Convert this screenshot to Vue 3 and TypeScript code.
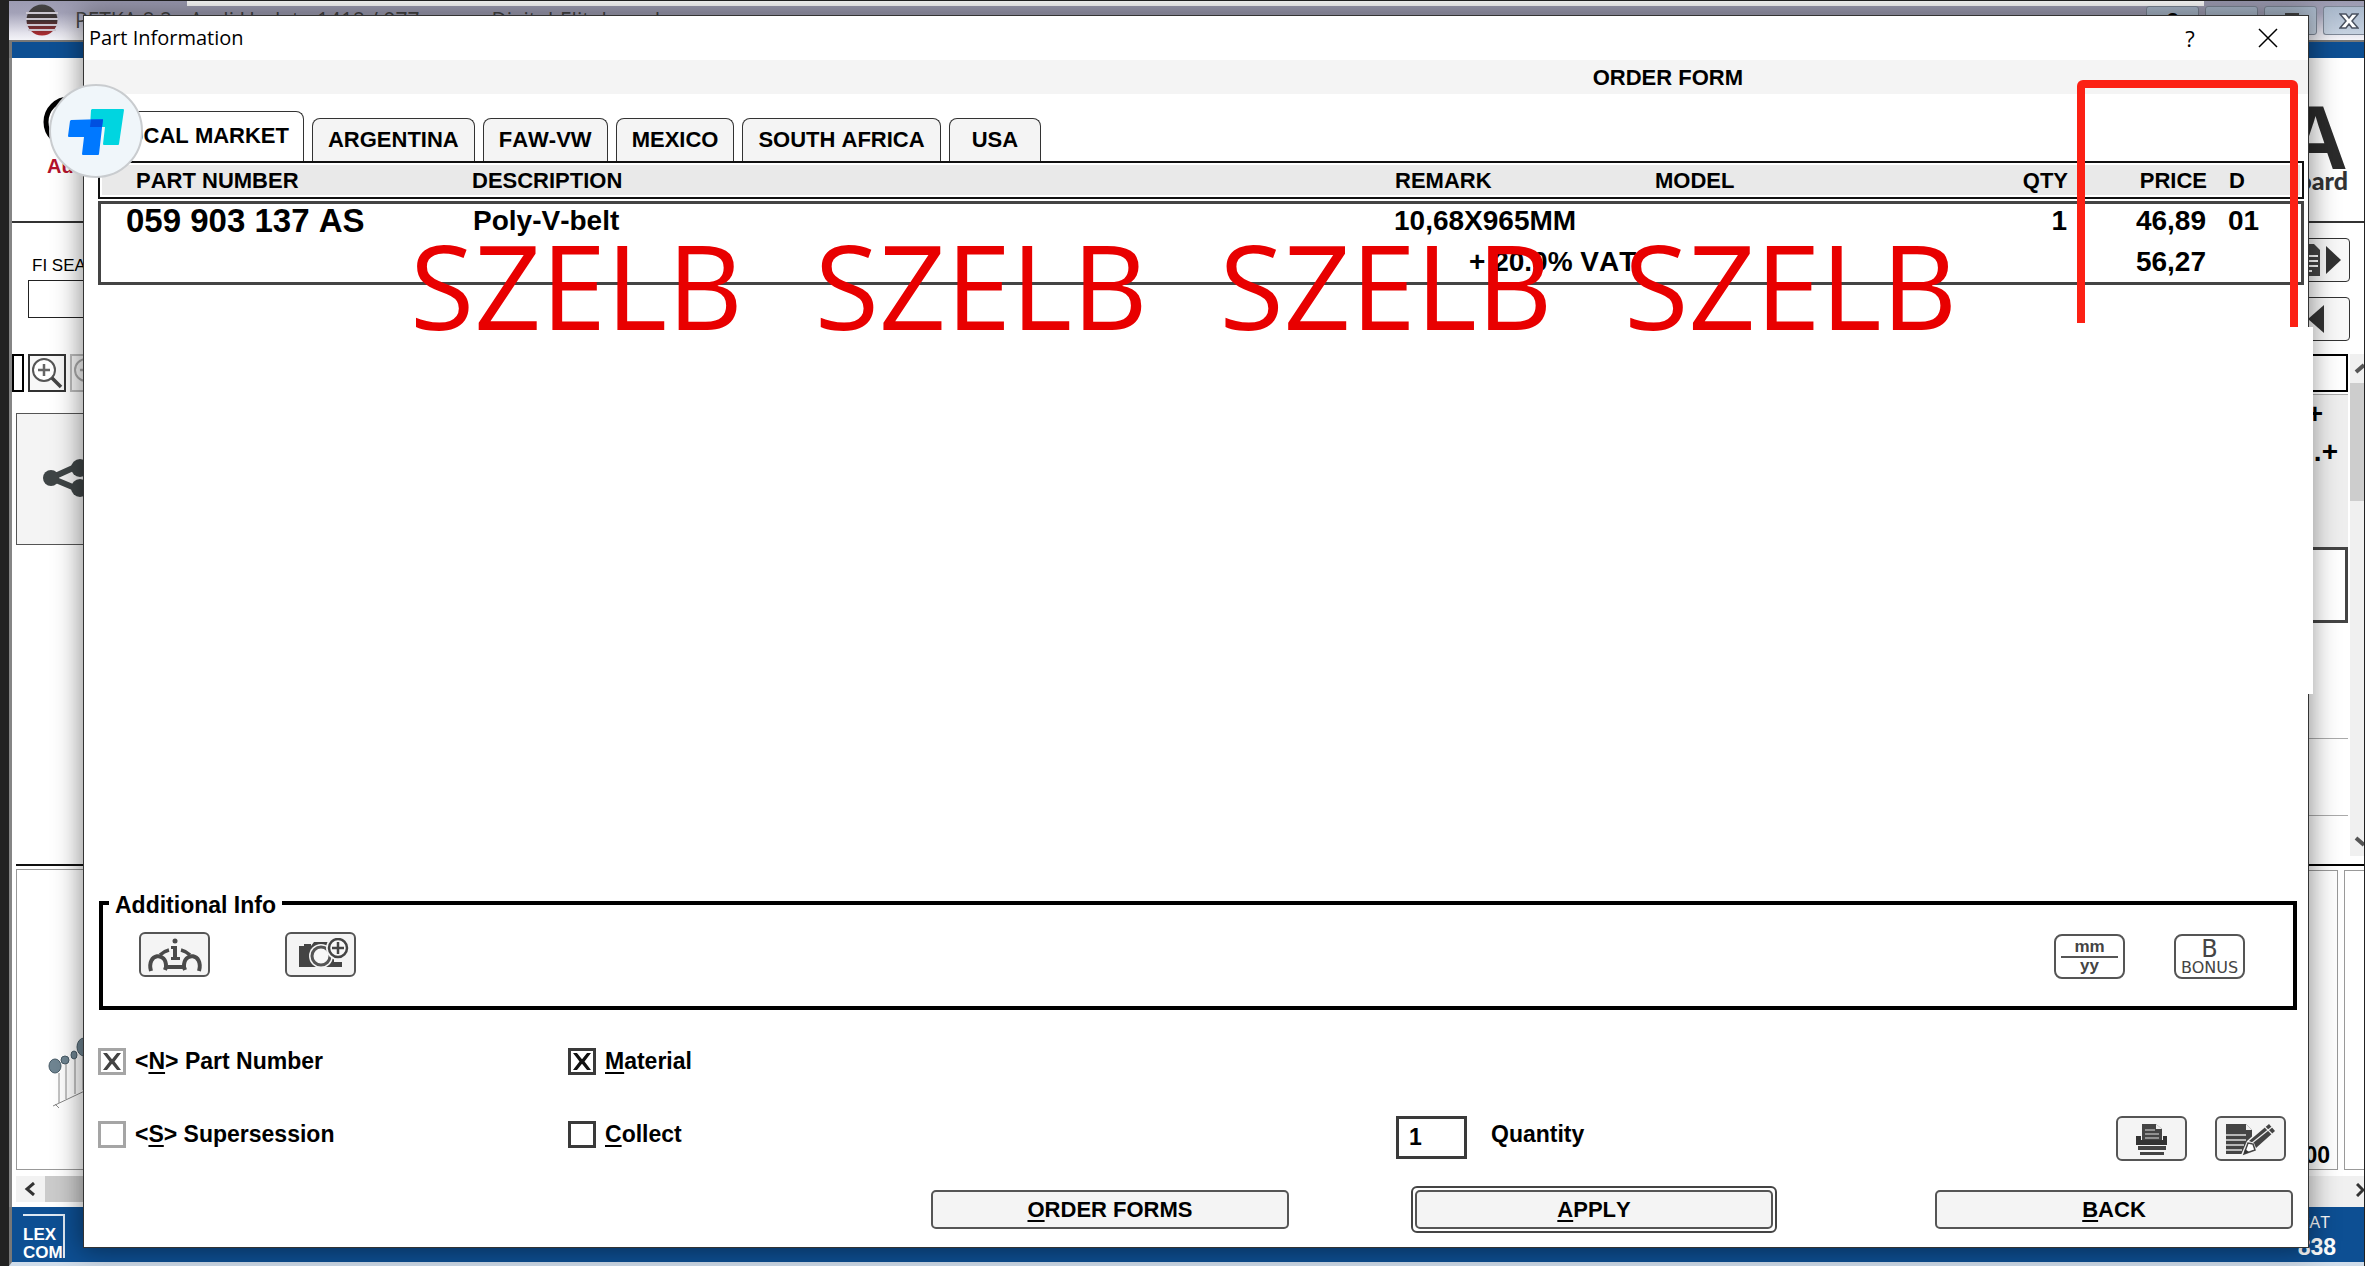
<script setup lang="ts">
import { ref } from 'vue'

interface Market {
  id: string
  label: string
}

const markets: Market[] = [
  { id: 'local', label: 'LOCAL MARKET' },
  { id: 'ar', label: 'ARGENTINA' },
  { id: 'cn', label: 'FAW-VW' },
  { id: 'mx', label: 'MEXICO' },
  { id: 'za', label: 'SOUTH AFRICA' },
  { id: 'us', label: 'USA' },
]
const activeMarket = ref('local')
const usePartNumber = ref(true)
const useSupersession = ref(false)
const material = ref(true)
const collect = ref(false)
const quantity = ref('1')
const stamps = [1, 2, 3, 4]
</script>

<template>
  <div class="screen">
    <!-- catalogue window behind the dialog -->
    <div class="app-window">
      <header class="app-title">
        <svg class="app-logo" width="32" height="32" viewBox="0 0 32 32" aria-hidden="true">
          <defs>
            <linearGradient id="ball" x1="0" y1="0" x2="0" y2="1">
              <stop offset="0" stop-color="#444" />
              <stop offset="0.5" stop-color="#3a3030" />
              <stop offset="1" stop-color="#b02a30" />
            </linearGradient>
          </defs>
          <circle cx="16" cy="16" r="15.5" fill="url(#ball)" />
          <path d="M0 9h32M0 15h32M0 21h32M2 26h28" stroke="#cbc6cf" stroke-width="2" />
        </svg>
        <span class="app-name">PETKA 8.2 - Audi Update 1418 / 977 - www.Digital-Eliteboard.com</span>
        <div class="win-buttons">
          <button type="button" aria-label="Help">?</button>
          <button type="button" aria-label="Minimise"></button>
          <button type="button" aria-label="Restore">
            <svg width="20" height="18" viewBox="0 0 20 18"><path d="M5 6V2h12v9h-4M2 6h11v10H2z" fill="#fff" stroke="#444" stroke-width="2" /></svg>
          </button>
          <button type="button" class="win-close" aria-label="Close application">
            <svg width="20" height="16" viewBox="0 0 20 16"><path d="M1 1h6l3 4 3-4h6l-6 7 6 7h-6l-3-4-3 4H1l6-7z" fill="#fff" stroke="#4a5260" stroke-width="1.5" /></svg>
          </button>
        </div>
      </header>
      <div class="blue-strip"></div>

      <div class="app-body">
        <aside class="side-left">
          <div class="brand">
            <svg width="60" height="60" viewBox="0 0 60 60" aria-hidden="true"><circle cx="31" cy="30" r="23" fill="none" stroke="#000" stroke-width="5" /></svg>
            <span class="brand-name">Audi</span>
          </div>
          <div class="search">
            <label for="fi">FI SEARCH</label>
            <input id="fi" type="text" />
          </div>
          <div class="zoom-tools">
            <span class="zoom-edge"></span>
            <button type="button" aria-label="Zoom in">
              <svg width="34" height="34" viewBox="0 0 34 34"><circle cx="14" cy="14" r="11" fill="#fff" stroke="#555" stroke-width="2" /><path d="M8 14h12M14 8v12" stroke="#666" stroke-width="2.5" /><path d="M22 22l9 9" stroke="#444" stroke-width="3.5" /></svg>
            </button>
            <button type="button" class="dim" aria-label="Zoom out" disabled>
              <svg width="34" height="34" viewBox="0 0 34 34"><circle cx="14" cy="14" r="11" fill="none" stroke="#aaa" stroke-width="2" /><path d="M8 14h12" stroke="#aaa" stroke-width="2.5" /></svg>
            </button>
          </div>
          <div class="share-panel">
            <svg width="60" height="60" viewBox="0 0 60 60" aria-hidden="true"><path d="M34 29 12 39l24 10" fill="none" stroke="#3f4546" stroke-width="6" /><circle cx="12" cy="39" r="8" fill="#3f4546" /><circle cx="41" cy="29" r="9" fill="#3f4546" /><circle cx="41" cy="49" r="9" fill="#3f4546" /></svg>
          </div>
          <div class="thumb-panel">
            <svg width="50" height="76" viewBox="0 0 50 76" aria-hidden="true">
              <g fill="#6f8592" stroke="#475a66">
                <ellipse cx="14" cy="32" rx="6" ry="7" /><ellipse cx="24" cy="26" rx="4" ry="4" /><ellipse cx="33" cy="21" rx="3" ry="4" /><ellipse cx="43" cy="13" rx="7" ry="9" />
              </g>
              <path d="M18 39v30M25 30v35M34 25v35M42 22v34M12 72l38-18M14 70l4 4" fill="none" stroke="#888" />
            </svg>
          </div>
          <div class="h-scroll"><button type="button" aria-label="Scroll left"><svg width="12" height="14" viewBox="0 0 12 14"><path d="M10 1 3 7l7 6" fill="none" stroke="#333" stroke-width="3" /></svg></button><span class="h-thumb"></span></div>
        </aside>

        <aside class="side-right">
          <div class="elite"><span class="elite-a">A</span><span class="elite-b">board</span></div>
          <div class="side-buttons">
            <button type="button" aria-label="Next sheet"><svg width="42" height="34" viewBox="0 0 42 34"><path d="M0 1h14l6 6v26H0z" fill="#444" /><path d="M4 13h14M4 18h14M4 23h14M4 28h8" stroke="#fff" stroke-width="2" /><path d="M26 3v28l15-14z" fill="#333" /></svg></button>
            <button type="button" aria-label="Previous sheet"><svg width="42" height="34" viewBox="0 0 42 34"><path d="M24 3v28L8 17z" fill="#333" /></svg></button>
          </div>
          <div class="list-wrap">
            <div class="list">
              <div class="list-box"></div>
              <div class="list-grey"><b>+</b><b>.+</b></div>
              <div class="list-sel"></div>
              <div class="list-line"></div>
              <div class="list-line second"></div>
            </div>
            <div class="v-scroll">
              <svg width="14" height="29" viewBox="0 0 14 29"><path d="M6 18l8-7" stroke="#555" stroke-width="4" /></svg>
              <span class="v-thumb"></span>
              <svg class="v-down" width="14" height="29" viewBox="0 0 14 29"><path d="M6 11l8 7" stroke="#555" stroke-width="4" /></svg>
            </div>
          </div>
          <div class="total-wrap"><div class="total">0,00</div><div class="total-next"></div></div>
          <div class="r-scroll"><svg width="8" height="14" viewBox="0 0 8 14"><path d="M1 1l6 6-6 6" fill="none" stroke="#333" stroke-width="3" /></svg></div>
        </aside>
      </div>

      <footer class="app-foot">
        <div class="lexcom"><span>LEX</span><span>COM</span></div>
        <div class="cat"><span class="cat-label">CAT</span><span class="cat-no">838</span></div>
      </footer>
    </div>

    <!-- part information dialog -->
    <section class="dialog" role="dialog" aria-label="Part Information">
      <header class="dlg-title">
        <h1>Part Information</h1>
        <button type="button" class="dlg-help" aria-label="Help">?</button>
        <button type="button" class="dlg-close" aria-label="Close">
          <svg width="20" height="20" viewBox="0 0 20 20"><path d="M1 1l18 18M19 1 1 19" stroke="#000" stroke-width="1.5" /></svg>
        </button>
      </header>
      <div class="band">ORDER FORM</div>

      <div class="dlg-main">
        <nav class="tabs" role="tablist">
          <button
            v-for="m in markets"
            :key="m.id"
            type="button"
            role="tab"
            :class="{ active: m.id === activeMarket }"
            :aria-selected="m.id === activeMarket"
            @click="activeMarket = m.id"
          >{{ m.label }}</button>
        </nav>

        <table class="parts">
          <thead>
            <tr>
              <th class="first">PART NUMBER</th><th>DESCRIPTION</th><th>REMARK</th><th>MODEL</th><th class="num">QTY</th><th class="num">PRICE</th><th class="d">D</th>
            </tr>
          </thead>
          <tbody>
            <tr>
              <td class="part">059 903 137 AS</td><td>Poly-V-belt</td><td>10,68X965MM</td><td></td><td class="num">1</td><td class="num">46,89</td><td class="d">01</td>
            </tr>
            <tr>
              <td></td><td></td><td class="vat">+ 20.0% VAT</td><td></td><td></td><td class="num">56,27</td><td></td>
            </tr>
          </tbody>
        </table>

        <div class="spacer"></div>

        <fieldset class="info">
          <legend>Additional Info</legend>
          <div class="info-row">
            <button type="button" class="icon-btn" aria-label="Vehicle information">
              <svg width="56" height="34" viewBox="0 0 56 34"><g fill="none" stroke="#4a4a4a" stroke-width="4"><path d="M4 33c-5-18 16-20 15-4l-1 3M52 33c5-18-16-20-15-4l1 3M18 29h20" /><path d="M13 17c3-3 5-4 9-5M43 17c-3-3-5-4-9-5" stroke-width="3.500" /></g><circle cx="28" cy="3" r="2.5" fill="#4a4a4a" /><path d="M24 8h6v11h3v3h-9v-3h2v-8h-2z" fill="#4a4a4a" /></svg>
            </button>
            <button type="button" class="icon-btn photo" aria-label="Add photo">
              <svg width="56" height="34" viewBox="0 0 56 34"><path d="M6 8h5V6h7v2l3-4h14v3h6v22H6z" fill="#444" /><path d="M38 24h11v5H34z" fill="#444" /><circle cx="28" cy="18" r="12" fill="#f4f4f4" /><circle cx="28" cy="18" r="9" fill="#f8f8f8" stroke="#555" stroke-width="3" /><circle cx="45" cy="10" r="12" fill="#f4f4f4" /><circle cx="45" cy="10" r="9" fill="#f8f8f8" stroke="#444" stroke-width="2.5" /><path d="M39 10h12M45 4v12" stroke="#444" stroke-width="2.5" /></svg>
            </button>
            <button type="button" class="icon-btn plain date"><span>mm</span><span>yy</span></button>
            <button type="button" class="icon-btn plain bonus"><span class="big">B</span><span>BONUS</span></button>
          </div>
        </fieldset>

        <div class="options">
          <label class="check soft"><input v-model="usePartNumber" type="checkbox" /><span>&lt;<u>N</u>&gt; Part Number</span></label>
          <label class="check"><input v-model="material" type="checkbox" /><span><u>M</u>aterial</span></label>
          <span></span>
          <label class="check soft low"><input v-model="useSupersession" type="checkbox" /><span>&lt;<u>S</u>&gt; Supersession</span></label>
          <label class="check low"><input v-model="collect" type="checkbox" /><span><u>C</u>ollect</span></label>
          <div class="qty-row">
            <input id="qty" v-model="quantity" type="text" />
            <label for="qty">Quantity</label>
            <button type="button" class="icon-btn" aria-label="Print">
              <svg width="36" height="34" viewBox="0 0 36 34"><path d="M8 2h14l6 5v12H8z" fill="#444" /><path d="M11 8h10M11 12h14M11 16h14" stroke="#aaa" stroke-width="1.5" /><path d="M22 2v5h6" fill="#eee" /><path d="M2 14h5v4h22v-4h4v9H2z" fill="#333" /><path d="M4 24h28v4H4zM6 30h24v3H6z" fill="#444" /></svg>
            </button>
            <button type="button" class="icon-btn" aria-label="Edit note">
              <svg width="56" height="34" viewBox="0 0 56 34"><path d="M3 2h20l6 6v24H3z" fill="#444" /><path d="M3 13h20M3 18h20M3 23h18M3 28h16" stroke="#ddd" stroke-width="1.5" /><path d="M23 2v6h6" fill="#eee" /><path d="M18 33 24 19 45 0l9 8-21 24z" fill="#f4f4f4" /><path d="M21 32l4-11 5 1 2 6z" fill="#fff" stroke="#444" stroke-width="1.5" /><path d="M21 32l1-5 4 3z" fill="#333" /><path d="M26 19 46 2l6 7-19 17-2-5z" fill="#444" /><path d="M29 21 49 5M42 5l7 7" stroke="#eee" stroke-width="1.2" /></svg>
            </button>
          </div>
        </div>

        <div class="actions">
          <button type="button" class="wide"><u>O</u>RDER FORMS</button>
          <span class="default-ring"><button type="button" class="wide"><u>A</u>PPLY</button></span>
          <button type="button" class="wide back"><u>B</u>ACK</button>
        </div>
      </div>
    </section>

    <!-- overlays above the dialog -->
    <div class="patch"></div>
    <div class="stamps"><span v-for="s in stamps" :key="s">SZELB</span></div>
    <div class="marker"><i></i><i></i></div>
    <div class="bubble">
      <svg width="90" height="90" viewBox="0 0 90 90" aria-hidden="true">
        <path d="M41 23h31a1 1 0 0 1 1 1l-5 34a1 1 0 0 1-1 1H53a1 1 0 0 1-1-1l2-17H39l1-17z" fill="#00d5e0" />
        <path d="M20 34l32-1-4 35a1 1 0 0 1-1 1H32a1 1 0 0 1-1-1l2-17H18a1 1 0 0 1-1-1l2-15z" fill="#0078ff" />
        <path d="M40 33.500h12l-1 7.500H39z" fill="#0050e0" />
      </svg>
    </div>
  </div>
</template>

<style>
body {
  margin: 0;
}
</style>

<style scoped>
* {
  box-sizing: border-box;
}
button,
input {
  font: inherit;
  color: inherit;
  margin: 0;
}
button {
  padding: 0;
}
svg {
  display: block;
}
.screen {
  position: relative;
  min-height: 100vh;
  overflow: hidden;
  display: flex;
  font-family: 'Liberation Sans', Arial, sans-serif;
  font-kerning: none;
  color: #000;
  background: #222;
  padding: 1px 1px 0 9px;
}
.app-window {
  flex: 1;
  display: flex;
  flex-direction: column;
  background: #fff;
  overflow: hidden;
}
.app-title {
  height: 41px;
  display: flex;
  align-items: flex-start;
  background:
    linear-gradient(#fff, #fff) 178px 0 / calc(100% - 338px) 5px no-repeat,
    linear-gradient(#9c9bb2 0, #a3a2b8 12px, #e4e3ec 32px, #f6f6fa 40px);
  border-bottom: 2px solid #777;
}
.app-logo {
  margin: 3px 0 0 17px;
}
.app-name {
  flex: 1;
  margin: 5px 0 0 17px;
  font: 21px/28px 'Open Sans', 'Noto Sans', sans-serif;
  color: #444;
}
.win-buttons {
  display: flex;
  gap: 6px;
  padding-top: 5px;
}
.win-buttons button {
  width: 53px;
  height: 29px;
  border: 1px solid #7d8796;
  border-radius: 3px;
  background: linear-gradient(#a9b8cb, #c5d1e0);
  font-weight: bold;
  font-size: 20px;
  display: flex;
  align-items: center;
  justify-content: center;
}
.win-buttons .win-close {
  width: 41px;
  border-radius: 3px 0 0 3px;
  border-right: 0;
  padding-left: 10px;
}
.blue-strip {
  height: 16px;
  background: #0d4f93;
  border-left: 3px solid #777;
}
.app-body {
  flex: 1;
  display: flex;
  justify-content: space-between;
  border-left: 3px solid #858585;
}
.side-left {
  width: 120px;
  display: flex;
  flex-direction: column;
}
.brand {
  height: 165px;
  border-bottom: 2px solid #333;
  padding: 34px 0 0 26px;
}
.brand-name {
  display: block;
  padding-left: 9px;
  font: bold 20px/28px 'Liberation Sans', sans-serif;
  color: #b4122c;
}
.search {
  padding: 29px 0 0 16px;
  height: 131px;
}
.search label {
  display: block;
  padding-left: 4px;
  font-size: 17px;
  line-height: 28px;
}
.search input {
  width: 120px;
  height: 38px;
  border: 1px solid #222;
  background: #fff;
}
.zoom-tools {
  display: flex;
  gap: 4px;
  height: 59px;
}
.zoom-edge {
  width: 12px;
  height: 38px;
  border: 2px solid #000;
}
.zoom-tools button {
  width: 38px;
  height: 38px;
  border: 2px solid #333;
  background: #f7f7f7;
}
.zoom-tools .dim {
  border-color: #bbb;
}
.share-panel {
  height: 132px;
  margin-left: 4px;
  border: 1px solid #555;
  background: #f4f4f4;
  padding: 25px 0 0 22px;
}
.thumb-panel {
  flex: 1;
  margin: 324px 0 0 4px;
  border: 1px solid #999;
  outline: 2px solid #111;
  outline-offset: 3px;
  clip-path: inset(-5px 0 0 0);
  padding: 164px 0 0 24px;
}
.h-scroll {
  height: 37px;
  padding: 6px 0 5px 4px;
  display: flex;
}
.h-scroll button {
  width: 29px;
  border: 0;
  background: #f2f2f2;
  padding-left: 8px;
}
.h-thumb {
  flex: 1;
  background: #cbcbcb;
}
.side-right {
  width: 85px;
  display: flex;
  flex-direction: column;
}
.elite {
  height: 165px;
  border-bottom: 2px solid #333;
  padding: 48px 16px 0 0;
  display: flex;
  flex-direction: column;
  align-items: flex-end;
}
.elite-a {
  font: bold 90px/64px 'Liberation Sans Narrow', 'Liberation Sans', sans-serif;
  color: #2b2b2b;
}
.elite-b {
  font: 900 25px/20px Lato, sans-serif;
  color: #333;
}
.side-buttons {
  height: 131px;
  padding: 15px 14px 0 0;
  display: flex;
  flex-direction: column;
  gap: 15px;
}
.side-buttons button {
  height: 44px;
  border: 1px solid #333;
  border-radius: 4px;
  background: #f8f8f8;
  padding: 0 7px 0 0;
  display: flex;
  align-items: center;
  justify-content: flex-end;
}
.list-wrap {
  display: flex;
  height: 510px;
}
.list {
  width: 69px;
}
.list-box {
  height: 38px;
  border: 2px solid #000;
}
.list-grey {
  margin-top: 2px;
  height: 153px;
  border-top: 1px solid #aaa;
  background: #eee;
  display: flex;
  flex-direction: column;
  align-items: flex-end;
  font-size: 28px;
  line-height: 38px;
  padding-right: 10px;
}
.list-grey b:first-child {
  padding-right: 15px;
}
.list-sel {
  height: 76px;
  border: 3px solid #444;
}
.list-line {
  height: 116px;
  border-bottom: 1px solid #aaa;
}
.list-line.second {
  height: 77px;
}
.v-scroll {
  margin: 0 0 8px 2px;
  width: 14px;
  background: #f0f0f0;
  display: flex;
  flex-direction: column;
}
.v-thumb {
  height: 118px;
  background: #cdcdcd;
}
.v-down {
  margin-top: auto;
}
.total-wrap {
  flex: 1;
  display: flex;
  gap: 6px;
  border-top: 2px solid #000;
  padding-top: 4px;
}
.total {
  width: 59px;
  border: 1px solid #999;
  display: flex;
  align-items: flex-end;
  justify-content: flex-end;
  padding: 0 7px 1px 0;
  font-size: 23px;
  line-height: 26px;
  font-weight: bold;
}
.total-next {
  flex: 1;
  border: 1px solid #999;
  border-right: 0;
}
.r-scroll {
  margin: 6px 0 0;
  height: 31px;
  background: #f0f0f0;
  display: flex;
  justify-content: flex-end;
  padding-top: 7px;
}
.app-foot {
  height: 59px;
  background: #0d4f93;
  border-bottom: 4px solid #cfdcea;
  border-left: 3px solid #777;
  display: flex;
  justify-content: space-between;
}
.lexcom {
  width: 42px;
  height: 44px;
  margin: 7px 0 0 11px;
  padding-top: 10px;
  border-top: 2px solid #dfe9f3;
  border-right: 2px solid #dfe9f3;
  font: bold 17px/18px 'Liberation Sans', sans-serif;
  color: #fff;
}
.lexcom span {
  display: block;
}
.cat {
  display: flex;
  flex-direction: column;
  align-items: flex-end;
  padding: 5px 28px 0 0;
  color: #fff;
}
.cat-label {
  padding-right: 6px;
  font-size: 16px;
  line-height: 22px;
}
.cat-no {
  font-size: 23px;
  line-height: 26px;
  font-weight: bold;
}

.dialog {
  position: absolute;
  top: 15px;
  right: 56px;
  bottom: 18px;
  left: 83px;
  border: 1px solid #333;
  background: #fff;
  box-shadow: 0 0 26px 2px rgba(0, 0, 0, 0.45);
  display: flex;
  flex-direction: column;
}
.dlg-title {
  height: 44px;
  display: flex;
  align-items: center;
  padding: 0 30px 0 5px;
}
.dlg-title h1 {
  flex: 1;
  margin: 0;
  font: 20px/28px 'Open Sans', 'Noto Sans', sans-serif;
}
.dlg-title button {
  border: 0;
  background: none;
}
.dlg-help {
  width: 20px;
  margin-right: 58px;
  font: 22px/28px 'Open Sans', sans-serif;
}
.band {
  height: 34px;
  background: #f4f4f4;
  text-align: right;
  padding-right: 565px;
  font-size: 22px;
  line-height: 36px;
  font-weight: bold;
}
.dlg-main {
  flex: 1;
  display: flex;
  flex-direction: column;
  padding: 17px 4px 14px 14px;
  font-weight: bold;
}
.tabs {
  height: 50px;
  display: flex;
  align-items: flex-end;
  gap: 8px;
}
.tabs button {
  height: 43px;
  padding: 0 15px;
  border: 1px solid #333;
  border-bottom: 0;
  border-radius: 8px 8px 0 0;
  background: #f4f4f4;
  font-size: 22px;
  line-height: 26px;
}
.tabs button:last-child {
  padding: 0 22px;
}
.tabs .active {
  height: 50px;
  padding: 0 14px 2px;
  background: #fff;
}
.parts {
  display: block;
  font-size: 28px;
  line-height: 34px;
}
.parts thead,
.parts tbody {
  display: block;
}
.parts thead {
  border: 2px solid #111;
  background: #e9e9e9;
  box-shadow: inset 0 0 0 2px #fff;
  font-size: 22px;
}
.parts thead tr {
  padding-top: 1px;
  height: 34px;
}
.parts tbody {
  margin-top: 2px;
  border: 3px solid #444;
  height: 84px;
}
.parts tr {
  display: grid;
  grid-template-columns: 372px minmax(0, 1fr) 260px 330px 83px 139px 95px;
}
.parts tbody tr {
  height: 41px;
}
.parts th,
.parts td {
  padding: 0;
  text-align: left;
  white-space: nowrap;
}
.parts .first {
  padding-left: 36px;
}
.parts .part {
  padding-left: 25px;
  font-size: 33px;
}
.parts .num {
  text-align: right;
}
.parts .d {
  padding-left: 22px;
}
.parts .vat {
  padding-left: 75px;
}
.spacer {
  flex: 1;
}
.info {
  height: 122px;
  margin: 0 7px 0 1px;
  border: 4px solid #000;
  padding: 14px 48px 0 36px;
  min-width: 0;
}
.info legend {
  margin-left: -30px;
  padding: 4px 6px 0;
  font-size: 23px;
  line-height: 26px;
}
.info-row {
  display: flex;
}
.icon-btn {
  width: 71px;
  height: 45px;
  border: 2px solid #555;
  border-radius: 6px;
  background: #f4f4f4;
  display: flex;
  align-items: center;
  justify-content: center;
}
.photo {
  margin-left: 75px;
}
.plain {
  margin-top: 2px;
  background: #fff;
  border-radius: 8px;
  flex-direction: column;
  color: #444;
}
.date {
  margin-left: auto;
  font-size: 17px;
  line-height: 16px;
}
.date span:first-child {
  width: 57px;
  line-height: 18px;
  border-bottom: 2px solid #555;
}
.date span:last-child {
  padding-bottom: 2px;
}
.bonus {
  margin-left: 49px;
  font: 16px/14px 'DejaVu Sans', sans-serif;
}
.bonus .big {
  font-size: 24px;
  line-height: 23px;
}
.options {
  margin-top: 38px;
  display: grid;
  grid-template-columns: 470px 828px minmax(0, 1fr);
  row-gap: 41px;
  font-size: 23px;
  line-height: 27px;
}
.check {
  display: flex;
  gap: 9px;
  align-items: flex-start;
}
.check.low {
  padding-top: 5px;
}
.check input {
  appearance: none;
  width: 28px;
  height: 27px;
  border: 3px solid #3a3a3a;
  background: #fff;
}
.check input:checked::before {
  content: '';
  display: block;
  width: 18px;
  height: 17px;
  margin: 2px;
  background: #111;
  clip-path: polygon(0 0, 22% 0, 50% 37%, 78% 0, 100% 0, 64% 50%, 100% 100%, 78% 100%, 50% 63%, 22% 100%, 0 100%, 36% 50%);
}
.soft input {
  border-color: #a5a5a5;
}
.soft input:checked::before {
  background: #444;
}
u {
  text-decoration-thickness: 2px;
  text-underline-offset: 3px;
}
.qty-row {
  display: flex;
  padding-right: 18px;
}
.qty-row input {
  width: 71px;
  height: 43px;
  border: 3px solid #3a3a3a;
  background: #fff;
  padding: 0 10px;
  font-size: 23px;
}
.qty-row label {
  flex: 1;
  padding: 5px 0 0 24px;
}
.qty-row .icon-btn + .icon-btn {
  margin-left: 28px;
}
.actions {
  margin-top: 25px;
  display: flex;
  align-items: center;
  justify-content: flex-end;
  gap: 122px;
  padding-right: 11px;
  font-size: 22px;
  line-height: 26px;
}
.wide {
  width: 358px;
  height: 39px;
  border: 2px solid #555;
  border-radius: 5px;
  background: #f4f4f4;
  font-weight: bold;
}
.default-ring {
  display: flex;
  padding: 2px;
  border: 2px solid #444;
  border-radius: 6px;
}
.back {
  margin-left: 36px;
}

.patch {
  position: absolute;
  top: 327px;
  right: 52px;
  width: 8px;
  height: 367px;
  background: #fff;
}
.stamps {
  position: absolute;
  top: 203px;
  left: 410px;
  display: flex;
  gap: 72px;
  font: 117px/164px 'Open Sans', 'Noto Sans', sans-serif;
  color: #e80000;
}
.marker {
  position: absolute;
  top: 80px;
  right: 67px;
  width: 221px;
  height: 247px;
  border-top: 8px solid #fc2114;
  border-radius: 6px 6px 0 0;
  display: flex;
  justify-content: space-between;
}
.marker i {
  width: 8px;
  height: 239px;
  background: #fc2114;
}
.marker i:first-child {
  height: 235px;
}
.bubble {
  position: absolute;
  top: 84px;
  left: 49px;
  width: 94px;
  height: 94px;
  border: 2px solid #c9cccf;
  border-radius: 50%;
  background: #f0f6fa;
}
</style>
